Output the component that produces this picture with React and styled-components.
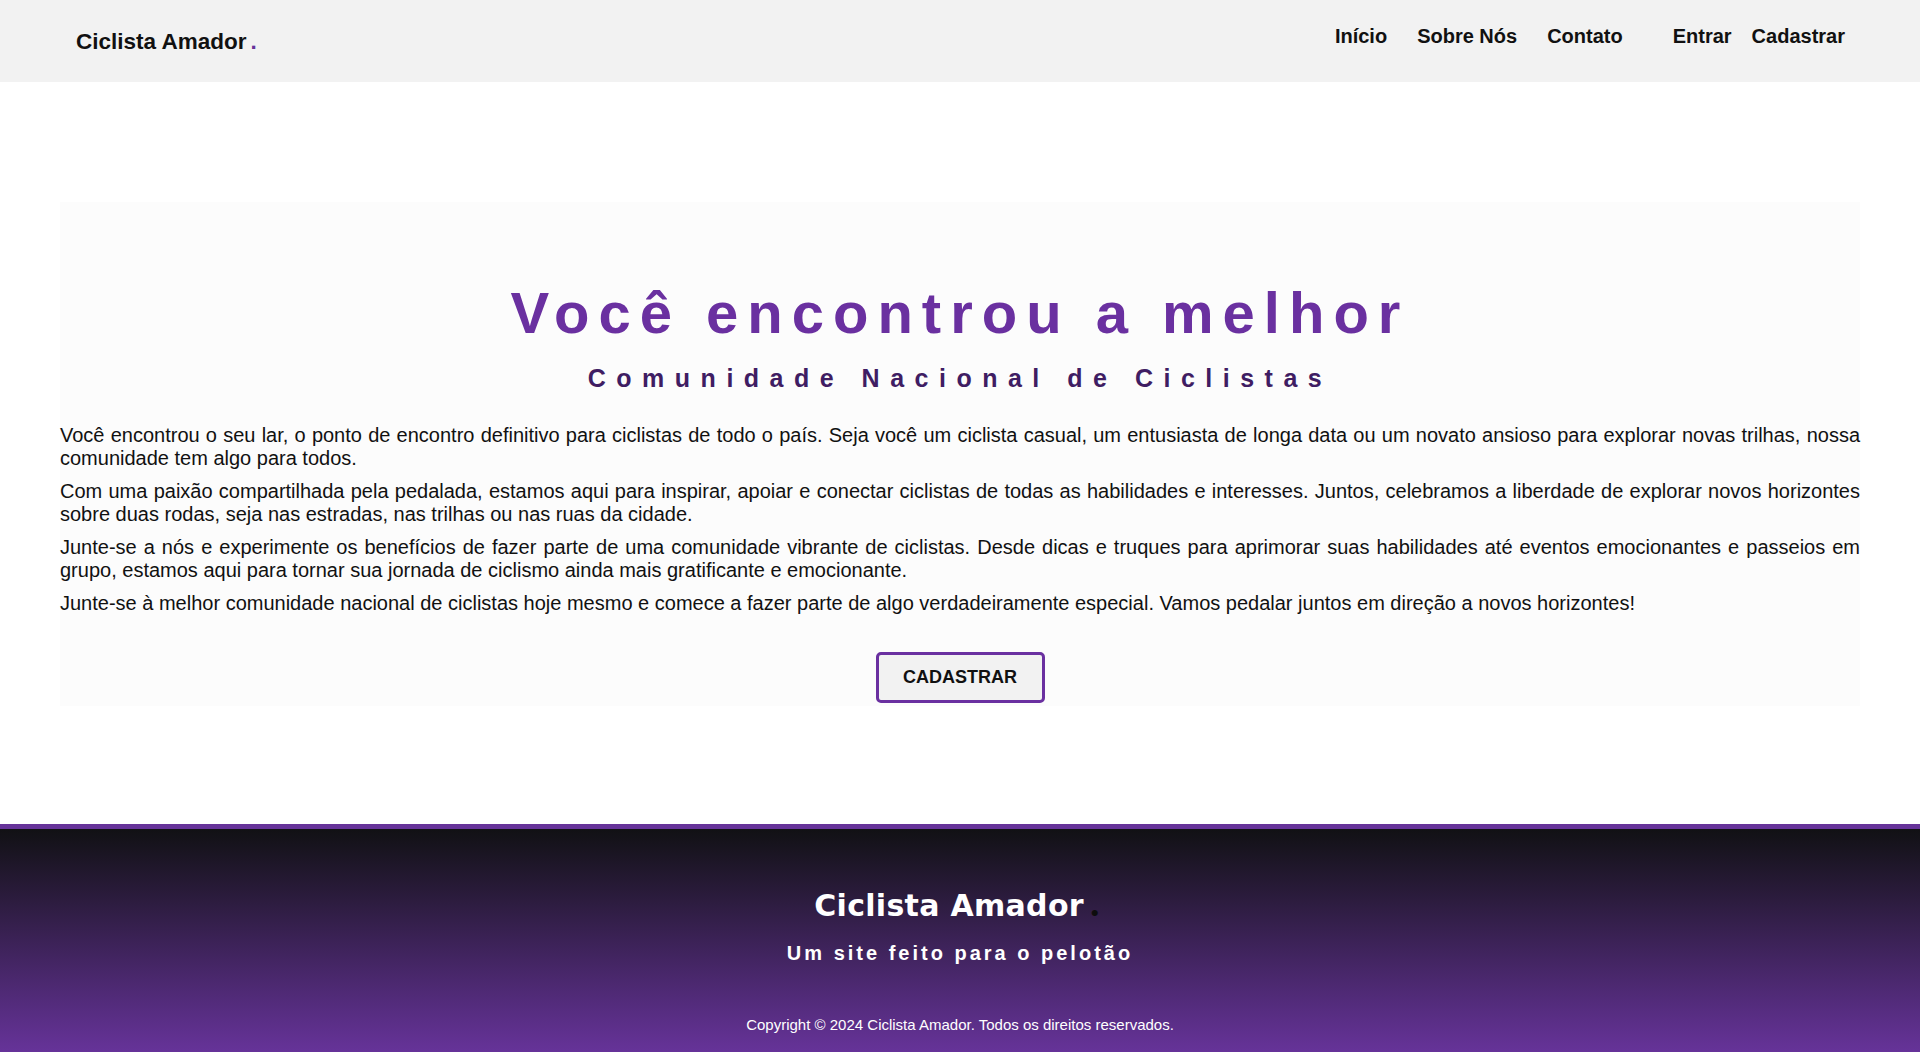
import React from 'react'
import styled, { createGlobalStyle } from 'styled-components'

const GlobalStyle = createGlobalStyle`
  * { box-sizing: border-box; }
  body {
    margin: 0;
    font-family: "Liberation Sans", Arial, sans-serif;
    background: #fff;
    color: #111;
  }
`;

const Header = styled.header`
  height: 82px;
  background: #f2f2f2;
  display: flex;
  align-items: center;
  justify-content: space-between;
  padding: 0 75px 0 76px;
`;

const Logo = styled.div`
  font-size: 22.5px;
  font-weight: bold;
  color: #111;
  padding-top: 2px;
`;

const Dot = styled.span`
  color: ${p => p.$color || '#663399'};
  margin-left: ${p => p.$gap || '4px'};
  font-size: ${p => p.$size || 'inherit'};
  font-family: ${p => p.$font || 'inherit'};
  line-height: 0;
`;

const Menu = styled.nav`
  display: flex;
  align-items: center;
  margin-bottom: 9px;
`;

const LinkGroup = styled.ul`
  display: flex;
  gap: ${p => p.$gap};
  list-style: none;
  margin: 0;
  padding: 0;
  & + & {
    margin-left: 50px;
  }
`;

const MenuItem = styled.li`
  font-size: 20px;
  font-weight: bold;
  color: #111;
  cursor: pointer;
`;

const Main = styled.main`
  padding: 120px 60px 118px;
`;

const Hero = styled.section`
  background: #fcfcfc;
  padding-top: 77px;
  padding-bottom: 3px;
  display: flex;
  flex-direction: column;
  align-items: center;
`;

const Title = styled.h1`
  margin: 0;
  font-size: 58px;
  font-weight: bold;
  letter-spacing: 9px;
  color: #6a30a0;
`;

const Subtitle = styled.h2`
  margin: 18px 0 0;
  font-size: 25px;
  font-weight: bold;
  letter-spacing: 10.5px;
  color: #3f1d63;
`;

const Text = styled.div`
  margin-top: 21px;
  width: 100%;
`;

const Paragraph = styled.p`
  margin: 10px 0;
  font-size: 20px;
  line-height: 23px;
  text-align: justify;
  color: #111;
`;

const Button = styled.button`
  margin-top: 27px;
  width: 169px;
  height: 51px;
  border: 3px solid #6a30a0;
  border-radius: 5px;
  background: #f2f2f2;
  font-family: "Liberation Sans", Arial, sans-serif;
  font-size: 18px;
  font-weight: bold;
  color: #111;
  cursor: pointer;
`;

const Footer = styled.footer`
  border-top: 5px solid #663399;
  height: 228px;
  background: linear-gradient(to bottom, #111114, #663399);
  display: flex;
  flex-direction: column;
  align-items: center;
  padding-top: 59px;
  color: #fff;
`;

const FooterLogo = styled.div`
  font-family: "Comic Sans MS", "DejaVu Sans", sans-serif;
  font-size: 30px;
  font-weight: bold;
  letter-spacing: 0.3px;
  height: 35px;
  margin-right: 6px;
`;

const Tagline = styled.p`
  margin: 19px 0 0;
  font-size: 20px;
  font-weight: bold;
  letter-spacing: 3px;
`;

const Copyright = styled.p`
  margin: 51px 0 0;
  font-size: 15px;
`;

const paragraphs = [
  'Você encontrou o seu lar, o ponto de encontro definitivo para ciclistas de todo o país. Seja você um ciclista casual, um entusiasta de longa data ou um novato ansioso para explorar novas trilhas, nossa comunidade tem algo para todos.',
  'Com uma paixão compartilhada pela pedalada, estamos aqui para inspirar, apoiar e conectar ciclistas de todas as habilidades e interesses. Juntos, celebramos a liberdade de explorar novos horizontes sobre duas rodas, seja nas estradas, nas trilhas ou nas ruas da cidade.',
  'Junte-se a nós e experimente os benefícios de fazer parte de uma comunidade vibrante de ciclistas. Desde dicas e truques para aprimorar suas habilidades até eventos emocionantes e passeios em grupo, estamos aqui para tornar sua jornada de ciclismo ainda mais gratificante e emocionante.',
  'Junte-se à melhor comunidade nacional de ciclistas hoje mesmo e comece a fazer parte de algo verdadeiramente especial. Vamos pedalar juntos em direção a novos horizontes!',
];

const App = () => {
  return (
    <>
      <GlobalStyle />
      <Header>
        <Logo>
          Ciclista Amador<Dot>.</Dot>
        </Logo>
        <Menu>
          <LinkGroup $gap="30px">
            <MenuItem>Início</MenuItem>
            <MenuItem>Sobre Nós</MenuItem>
            <MenuItem>Contato</MenuItem>
          </LinkGroup>
          <LinkGroup $gap="20px">
            <MenuItem>Entrar</MenuItem>
            <MenuItem>Cadastrar</MenuItem>
          </LinkGroup>
        </Menu>
      </Header>

      <Main>
        <Hero>
          <Title>Você encontrou a melhor</Title>
          <Subtitle>Comunidade Nacional de Ciclistas</Subtitle>
          <Text>
            {paragraphs.map((t, i) => (
              <Paragraph key={i}>{t}</Paragraph>
            ))}
          </Text>
          <Button>CADASTRAR</Button>
        </Hero>
      </Main>

      <Footer>
        <FooterLogo>
          Ciclista Amador<Dot $color="#0d0d0d" $gap="6px" $size="40px" $font="Lato, sans-serif">.</Dot>
        </FooterLogo>
        <Tagline>Um site feito para o pelotão</Tagline>
        <Copyright>Copyright © 2024 Ciclista Amador. Todos os direitos reservados.</Copyright>
      </Footer>
    </>
  )
}

export default App
